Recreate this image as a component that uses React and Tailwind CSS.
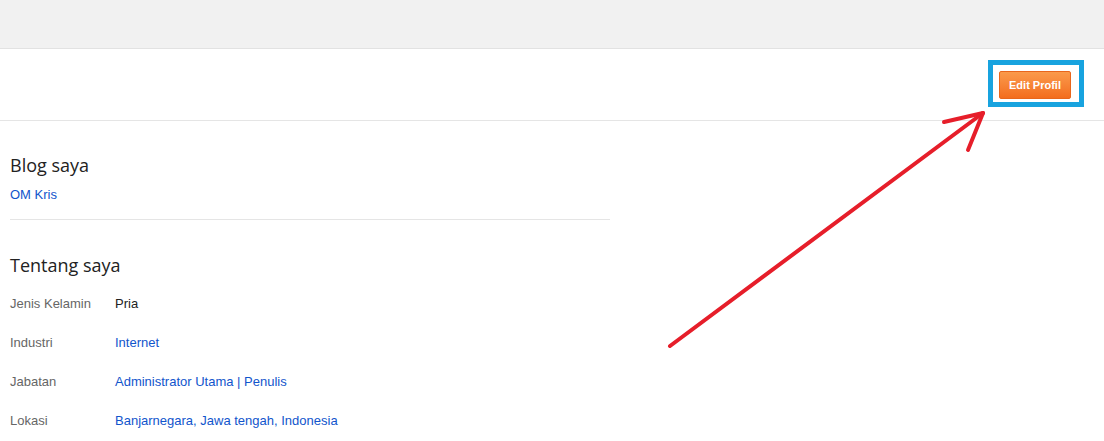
import React from "react";

const rows = [
  { label: "Jenis Kelamin", value: ["Pria"], link: false },
  { label: "Industri", value: ["Internet"], link: true },
  { label: "Jabatan", value: ["Administrator Utama | Penulis"], link: true },
  { label: "Lokasi", value: ["Banjarnegara", ", ", "Jawa tengah", ", ", "Indonesia"], link: true },
];

export default function App() {
  return (
    <div className="relative w-[1104px] h-[441px] overflow-hidden bg-white" style={{ fontFamily: "Arial, 'Liberation Sans', sans-serif" }}>
      <div className="h-[49px] bg-[#f1f1f1] border-b border-[#e2e2e2]" />
      <div className="h-[72px] border-b border-[#e5e5e5] flex items-center justify-end pr-[20px]">
        <div className="border-[5px] border-[#18a3df] pl-[6px] pr-[8px] pt-[6px] pb-[3px] mt-[-2px]">
          <button className="h-[28px] w-[72px] rounded-[2px] border border-[#e8661c] bg-gradient-to-b from-[#fa9a4a] to-[#f36d1d] text-white text-[11px] font-bold font-['Liberation_Sans',Arial,sans-serif]">
            Edit Profil
          </button>
        </div>
      </div>
      <div className="pl-[10px] w-[610px]">
        <h2 className="mt-[32px] text-[18px] leading-[24px] text-[#222] font-['Open_Sans',sans-serif]">Blog saya</h2>
        <a className="block mt-[10px] text-[13px] leading-[16px] text-[#15c]">OM Kris</a>
        <div className="mt-[16px] border-t border-[#e5e5e5]" />
        <h2 className="mt-[33px] text-[18px] leading-[24px] text-[#222] font-['Open_Sans',sans-serif]">Tentang saya</h2>
        <div className="mt-[19px] flex flex-col gap-[23px]">
          {rows.map((r) => (
            <div key={r.label} className="flex text-[13px] leading-[16px]">
              <div className="w-[105px] text-[#666]">{r.label}</div>
              <div className={r.link ? "text-[#15c]" : "text-[#222]"}>
                {r.value.join("")}
              </div>
            </div>
          ))}
        </div>
      </div>
      <svg className="absolute left-0 top-0 pointer-events-none" width="1104" height="441">
        <g stroke="#e61e2a" strokeWidth="4" strokeLinecap="round" fill="none">
          <line x1="670" y1="346" x2="983" y2="113" />
          <line x1="944" y1="122" x2="983" y2="113" />
          <line x1="968" y1="150" x2="983" y2="113" />
        </g>
      </svg>
    </div>
  );
}
